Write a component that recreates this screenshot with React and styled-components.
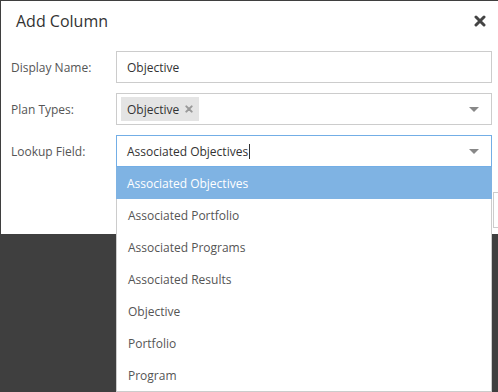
import React from "react";
import styled, { createGlobalStyle } from "styled-components";

const Global = createGlobalStyle`
  html, body { margin: 0; padding: 0; }
  body {
    background: #3f3f3f;
    overflow: hidden;
    font-family: "Open Sans", "Noto Sans", sans-serif;
    width: 498px;
    height: 392px;
  }
`;

const Stage = styled.div`
  position: relative;
  padding: 1px 0 0 1px;
  width: 498px;
  height: 392px;
  box-sizing: border-box;
`;

const Dialog = styled.div`
  width: 497px;
  height: 233px;
  background: #fff;
  display: flex;
  flex-direction: column;
`;

const Header = styled.div`
  height: 40px;
  display: flex;
  align-items: center;
  justify-content: space-between;
  padding: 0 11px 0 15px;
`;

const Title = styled.h1`
  margin: 0;
  font-size: 16px;
  font-weight: 400;
  color: #333;
`;

const Close = styled.button`
  border: 0;
  background: none;
  padding: 0;
  width: 14px;
  height: 14px;
  display: flex;
  align-items: center;
  justify-content: center;
  color: #444;
`;

const Form = styled.div`
  display: flex;
  flex-direction: column;
  gap: 10px;
  padding: 10px 0 0 10px;
`;

const Row = styled.div`
  display: flex;
  align-items: center;
  position: relative;
`;

const Label = styled.label`
  width: 105px;
  font-size: 12px;
  color: #555;
`;

const Field = styled.div`
  box-sizing: border-box;
  width: 376px;
  height: 32px;
  border: 1px solid ${(p) => (p.$focused ? "#73aee6" : "#ccc")};
  display: flex;
  align-items: center;
  padding: 0 ${(p) => (p.$chips ? "0 0 4px" : "0 0 10px")};
  font-size: 12px;
  color: #333;
  position: relative;
`;

const Caret = styled.span`
  position: absolute;
  right: 12px;
  top: 13px;
  width: 0;
  height: 0;
  border-left: 5px solid transparent;
  border-right: 5px solid transparent;
  border-top: 5px solid #888;
`;

const Chip = styled.span`
  display: inline-flex;
  align-items: center;
  gap: 6px;
  height: 24px;
  padding: 0 6px;
  background: #e4e4e4;
  color: #333;
  font-size: 12px;
`;

const ChipX = styled.span`
  color: #999;
  display: flex;
`;

const Cursor = styled.span`
  display: inline-block;
  width: 1px;
  height: 15px;
  background: #333;
  margin-left: 1px;
`;

const List = styled.ul`
  position: absolute;
  left: 105px;
  top: 32px;
  width: 376px;
  box-sizing: border-box;
  margin: 0;
  padding: 0;
  list-style: none;
  background: #fff;
  border: 1px solid #ccc;
  border-top: 0;
  z-index: 5;
`;

const Item = styled.li`
  height: 32px;
  display: flex;
  align-items: center;
  padding-left: 11px;
  font-size: 12px;
  color: ${(p) => (p.$active ? "#fff" : "#555")};
  background: ${(p) => (p.$active ? "#7fb3e3" : "transparent")};
  margin: 0 ${(p) => (p.$active ? "-1px" : "0")};
`;

const Footer = styled.div`
  margin-top: auto;
  display: flex;
  padding: 0 0 6px 492px;
  overflow: hidden;
`;

const Button = styled.button`
  flex: none;
  height: 36px;
  width: 80px;
  border: 1px solid #ccc;
  background: #fff;
`;

const TimesIcon = ({ size = 12 }) => (
  <svg width={size} height={size} viewBox="0 0 12 12">
    <path d="M2 2 L10 10 M10 2 L2 10" stroke="currentColor" strokeWidth="3" strokeLinecap="round" />
  </svg>
);

const options = [
  "Associated Objectives",
  "Associated Portfolio",
  "Associated Programs",
  "Associated Results",
  "Objective",
  "Portfolio",
  "Program",
];

export default function App() {
  return (
    <>
      <Global />
      <Stage>
        <Dialog>
          <Header>
            <Title>Add Column</Title>
            <Close aria-label="Close">
              <TimesIcon size={12} />
            </Close>
          </Header>
          <Form>
            <Row>
              <Label>Display Name:</Label>
              <Field>Objective</Field>
            </Row>
            <Row>
              <Label>Plan Types:</Label>
              <Field $chips>
                <Chip>
                  Objective
                  <ChipX>
                    <TimesIcon size={8} />
                  </ChipX>
                </Chip>
                <Caret />
              </Field>
            </Row>
            <Row>
              <Label>Lookup Field:</Label>
              <Field $focused>
                Associated Objectives
                <Cursor />
                <Caret />
              </Field>
              <List>
                {options.map((o, i) => (
                  <Item key={o} $active={i === 0}>
                    {o}
                  </Item>
                ))}
              </List>
            </Row>
          </Form>
          <Footer>
            <Button aria-label="Cancel" />
          </Footer>
        </Dialog>
      </Stage>
    </>
  );
}
